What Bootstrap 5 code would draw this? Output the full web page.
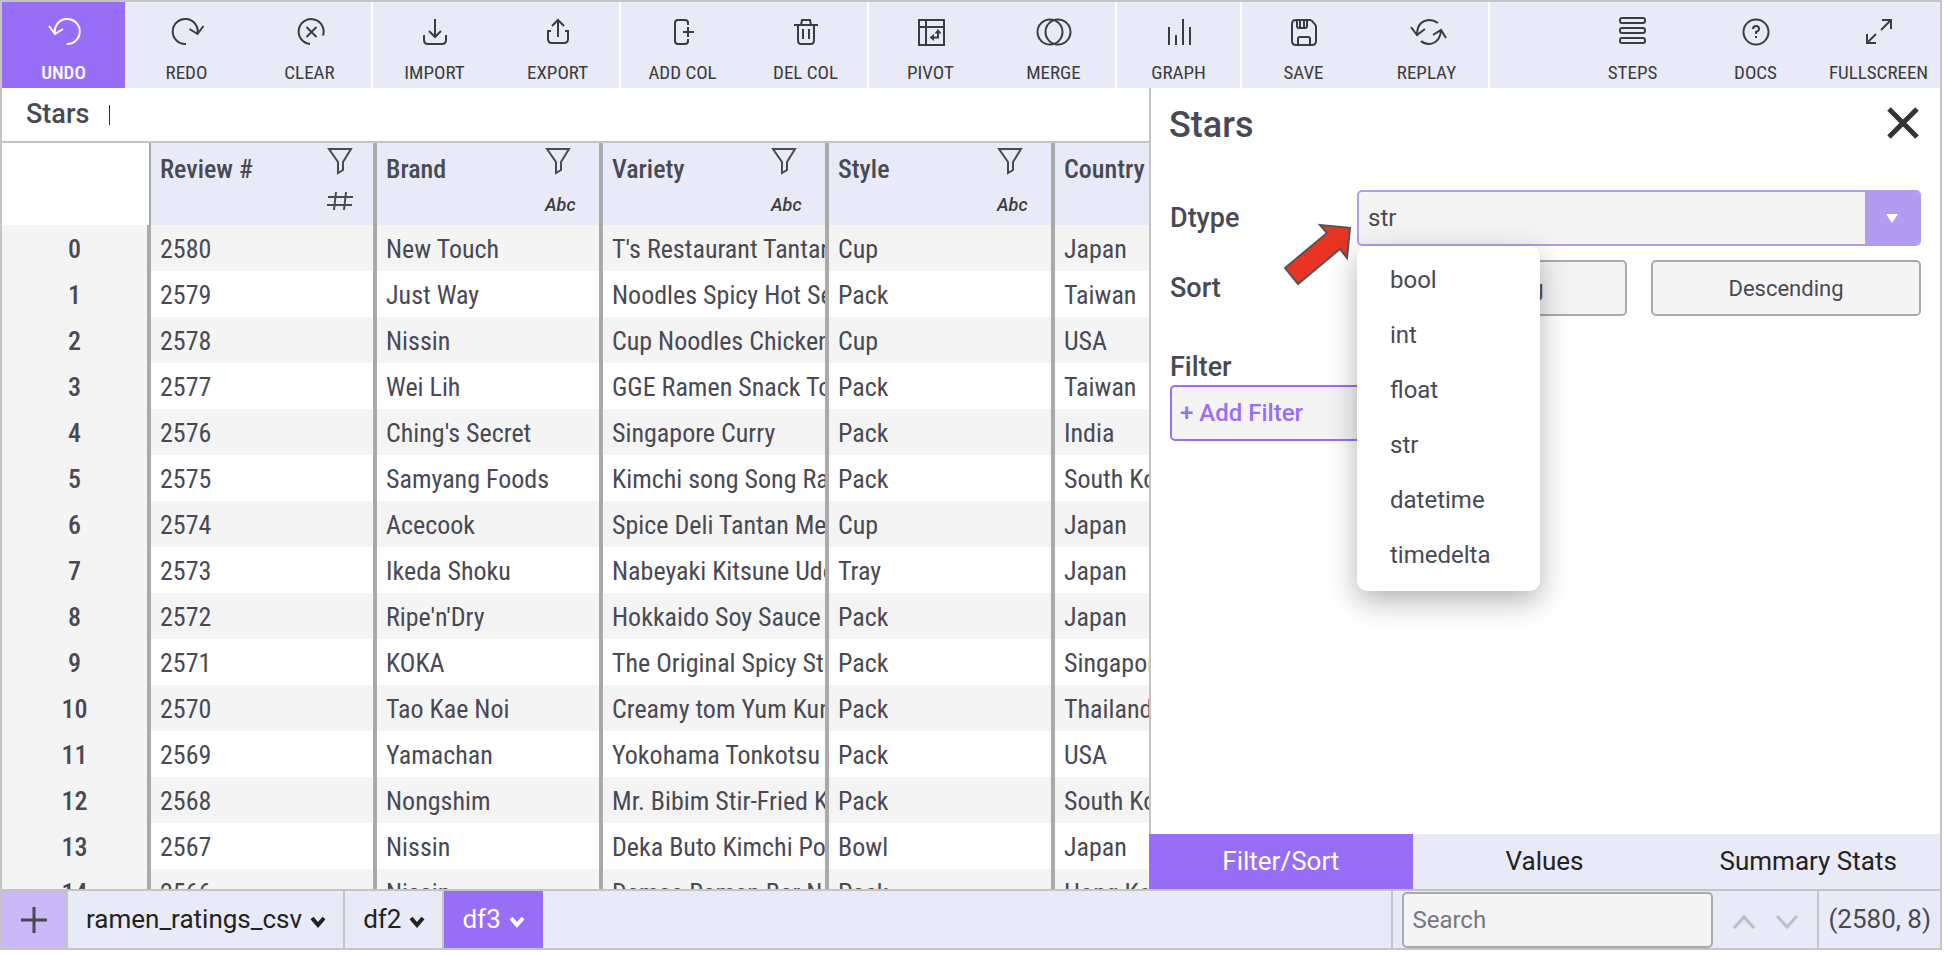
<!DOCTYPE html>
<html lang="en">
<head>
<meta charset="utf-8">
<title>Stars</title>
<meta name="viewport" content="width=device-width, initial-scale=1">
<link href="https://cdn.jsdelivr.net/npm/bootstrap@5.3.0/dist/css/bootstrap.min.css" rel="stylesheet">
<style>
:root{--ink:#494953;--dark:#3c3c40;--violet:#976ef7;--lav:#e8eaf7;--line:#c4c4c4;--rule:#aaa;--soft:#f4f4f4}
html,body{height:100%}
body{font-family:Roboto,"Liberation Sans",sans-serif;color:var(--ink);background:#fff;padding:0 2px 4px 0}
.sheet-app{height:100%;border:2px solid var(--line);overflow:hidden}
.cond{font-family:"Roboto Condensed",Roboto,"Liberation Sans",sans-serif}
button{border:0;padding:0;background:none;color:inherit}
svg{fill:none;stroke:currentColor;stroke-width:2;display:block;overflow:visible}
.toolbar{height:86px;flex:none;background:var(--lav);color:var(--dark);font-size:19px;line-height:24px}
.toolbar button{width:123px;height:100%;padding:12px 0 3px}
.toolbar button.active{background:var(--violet);color:#fff;font-weight:500}
.tool-group{border-right:2px solid #fff}
.work{min-height:0;flex:1 1 0}
.formula{height:55px;font-size:27px;font-weight:500;border-bottom:2px solid var(--line);gap:20px;padding-left:24px}
.caret-bar{width:1px;height:20px;background:#333}
.grid{table-layout:fixed;width:1279px;border-collapse:separate;border-spacing:0;font-size:26px;line-height:44px}
.grid th,.grid td{border-right:4px solid var(--rule);padding:2px 0 0 9px;white-space:nowrap;overflow:hidden}
.grid thead th{height:82px;background:var(--lav);font-weight:500;vertical-align:top;padding-top:4px}
.grid thead th:first-child{background:#fff;border-right:2px solid var(--rule)}
.grid tbody th{background:var(--soft);text-align:center;font-weight:500;padding-left:0}
.grid tbody tr:nth-child(odd) td{background:var(--soft)}
.kind{padding-right:20px}
.kind svg:first-child{margin-bottom:16px}
.abc{min-width:34px;font-family:Roboto,"Liberation Sans",sans-serif;font-size:18px;line-height:28px;font-style:italic;color:var(--dark)}
.side{width:791px;flex:none;border-left:2px solid var(--line)}
.side h2{font-size:36px;line-height:44px;font-weight:500}
.side-head{padding:15px 18px 0}
.fields{padding:43px 19px 0}
.lab{width:187px;font-size:27px;line-height:32px;font-weight:500}
.box{height:56px;border:2px solid var(--rule);border-radius:5px;background:var(--soft);font-size:22px}
.pick{border-color:#b49af0;overflow:hidden;font-size:24px}
.pick input{border:0;background:none;color:inherit;outline:0;padding:0 0 0 9px;min-width:0}
.pick button{width:54px;background:#b49af0;color:#fff}
.type-menu{position:absolute;left:0;top:56px;width:183px;border:0;border-radius:10px;padding:7px 0 8px;box-shadow:0 10px 30px rgba(0,0,0,.3)}
.type-menu .dropdown-item{font-size:24px;line-height:55px;padding:0 0 0 33px;color:var(--ink)}
.pointer{position:absolute;left:-73px;top:34px}
.sorts{margin-top:14px}
.filt{margin-top:35px;margin-bottom:2px}
.add{width:270px;border-color:var(--violet);color:var(--violet);font-size:24px;font-weight:500;padding-left:8px}
.modes{height:55px;margin-left:-2px;background:var(--lav);font-size:26px;color:#222}
.modes button.active{background:var(--violet);color:#fff}
.foot{height:59px;flex:none;border-top:2px solid var(--line);background:var(--lav);font-size:26px}
.foot>*{border-right:2px solid var(--line)}
.foot>button{color:#222}
.plus{width:66px;background:#cbb8f8}
.tab{padding:0 17px 0 18px;gap:8px}
.tab svg{margin-top:4px}
.foot .on{background:var(--violet);color:#fff;border-right:0;padding-right:18px}
.finder{padding-left:9px;padding-right:18px;gap:19px}
.finder svg{margin-top:4px}
.find{width:311px;font-size:24px;color:var(--ink);padding:0 0 0 8px}
.find::placeholder{color:#777783;opacity:1}
.dims{padding:0 9px}
</style>
</head>
<body>
<div class="sheet-app d-flex flex-column">
<header class="toolbar cond d-flex">
 <div class="tool-group d-flex">
  <button class="active d-flex flex-column align-items-center justify-content-between"><svg width="34" height="36" viewBox="0 0 34 36"><path d="M8 20A12.5 12.5 0 1 1 19.500 30M2 12L8 20L16 15"/></svg>UNDO</button>
  <button class="d-flex flex-column align-items-center justify-content-between"><svg width="34" height="36" viewBox="0 0 34 36"><path d="M27.500 20A12.500 12.500 0 1 0 16 30M33.500 12L27.500 20L19.500 15"/></svg>REDO</button>
  <button class="d-flex flex-column align-items-center justify-content-between"><svg width="34" height="36" viewBox="0 0 34 36"><path d="M17 30A12.500 12.500 0 1 1 30 21.500M13.500 13L23.500 23M23.500 13L13.500 23"/></svg>CLEAR</button>
 </div>
 <div class="tool-group d-flex">
  <button class="d-flex flex-column align-items-center justify-content-between"><svg width="34" height="36" viewBox="0 1 34 36"><path d="M17 6V24M11 18L17 24L23 18M6 22V27Q6 31 10 31H24Q28 31 28 27V22"/></svg>IMPORT</button>
  <button class="d-flex flex-column align-items-center justify-content-between"><svg width="34" height="36" viewBox="0 1 34 36"><path d="M17 24V7M11 13L17 7L23 13M10 18H7V26Q7 30 11 30H23Q27 30 27 26V18H24"/></svg>EXPORT</button>
 </div>
 <div class="tool-group d-flex">
  <button class="d-flex flex-column align-items-center justify-content-between"><svg width="34" height="36" viewBox="0 1 34 36"><path d="M22 12V10Q22 7 19 7H12Q9 7 9 10V28Q9 31 12 31H19Q22 31 22 28V26M17 19H28M22 14V24"/></svg>ADD COL</button>
  <button class="d-flex flex-column align-items-center justify-content-between"><svg width="34" height="36" viewBox="0 1 34 36"><path d="M5 12H29M12 12L13 7H21L22 12M9 12V27Q9 31 12 31H22Q25 31 25 27V12M14 16V26M20 16V26"/></svg>DEL COL</button>
 </div>
 <div class="tool-group d-flex">
  <button class="d-flex flex-column align-items-center justify-content-between"><svg width="34" height="36" viewBox="0 0 34 36"><path d="M5 6H30V31H5ZM5 13H30M12 6V31M18 23.500H24V18"/><path d="M20 20V27L15.500 23.500ZM20.500 19.500H27.500L24 15Z" fill="currentColor" stroke="none"/></svg>PIVOT</button>
  <button class="d-flex flex-column align-items-center justify-content-between"><svg width="36" height="36" viewBox="0 0 36 36"><circle cx="14" cy="18" r="12.500"/><circle cx="22" cy="18" r="12.500"/></svg>MERGE</button>
 </div>
 <div class="tool-group d-flex">
  <button class="d-flex flex-column align-items-center justify-content-between"><svg width="34" height="36" viewBox="0 0 34 36"><path d="M7 13V31M14 21V31M21 5V31M28 13V31"/></svg>GRAPH</button>
 </div>
 <div class="tool-group d-flex">
  <button class="d-flex flex-column align-items-center justify-content-between"><svg width="34" height="36" viewBox="0 0 34 36"><path d="M9 6H23Q25 6 29 12V27Q29 31 25 31H9Q5 31 5 27V10Q5 6 9 6M10 6V12Q10 14 12 14H18Q20 14 20 12V6M13 6V13M17 6V13M11 31V25Q11 23 13 23H21Q23 23 23 25V31"/></svg>SAVE</button>
  <button class="d-flex flex-column align-items-center justify-content-between"><svg width="36" height="36" viewBox="0 0 36 36"><path d="M8 21Q8 7 20 6Q25 6 29 9M2 13L8 21L16 15M32 16Q31 29 20 30Q15 30 12 27M24 21L32 16L37 24"/></svg>REPLAY</button>
 </div>
 <div class="d-flex ms-auto">
  <button class="d-flex flex-column align-items-center justify-content-between"><svg width="34" height="36" viewBox="0 0 34 36"><rect x="4" y="4" width="25" height="5" rx="2"/><rect x="4" y="14" width="25" height="5" rx="2"/><rect x="4" y="24" width="25" height="5" rx="2"/></svg>STEPS</button>
  <button class="d-flex flex-column align-items-center justify-content-between"><svg width="34" height="36" viewBox="0 1 34 36"><circle cx="17" cy="19" r="12.500"/><path d="M14 16Q14 13 17 13Q20 13 20 16Q20 18 17 19V21M17 23V25"/></svg>DOCS</button>
  <button class="d-flex flex-column align-items-center justify-content-between"><svg width="34" height="36" viewBox="0 1 34 36"><path d="M19 17L29 7M20 7H29V16M14 21L5 30M5 21V30H14"/></svg>FULLSCREEN</button>
 </div>
</header>
<div class="work d-flex overflow-hidden">
 <main class="flex-fill overflow-hidden">
  <div class="formula d-flex align-items-center">Stars<span class="caret-bar"></span></div>
  <table class="grid cond">
   <colgroup><col style="width:149px"><col><col><col><col><col></colgroup>
   <thead><tr id="heads"><th></th></tr></thead>
   <tbody id="rows"></tbody>
  </table>
 </main>
 <aside class="side d-flex flex-column">
  <div class="side-head d-flex justify-content-between">
   <h2 class="m-0">Stars</h2>
   <button aria-label="Close"><svg width="38" height="44" viewBox="0 0 38 44"><path stroke="#333" stroke-width="5" d="M5 6L33 34M33 6L5 34"/></svg></button>
  </div>
  <div class="fields">
   <div class="d-flex align-items-center">
    <label class="lab" for="dtype">Dtype</label>
    <div class="position-relative flex-fill">
     <div class="box pick d-flex"><input id="dtype" class="flex-fill" value="str"><button aria-label="Show types"><svg class="m-auto" width="12" height="12"><path d="M0 2H12L6 11Z" fill="#fff" stroke="none"/></svg></button></div>
     <div class="type-menu dropdown-menu show"><a class="dropdown-item" href="#">bool</a><a class="dropdown-item" href="#">int</a><a class="dropdown-item" href="#">float</a><a class="dropdown-item" href="#">str</a><a class="dropdown-item" href="#">datetime</a><a class="dropdown-item" href="#">timedelta</a></div>
     <svg class="pointer" width="68" height="62"><path d="M1 44L43 9L36 1L66 4L63 34L56 25L14 60Z" fill="#e93323" stroke="#555"/></svg>
    </div>
   </div>
   <div class="sorts d-flex align-items-center">
    <span class="lab">Sort</span>
    <div class="d-flex flex-fill gap-4"><button class="box flex-fill w-50">Ascending</button><button class="box flex-fill w-50">Descending</button></div>
   </div>
   <div class="lab filt">Filter</div>
   <button class="box add text-start">+ Add Filter</button>
  </div>
  <div class="modes d-flex mt-auto"><button class="active flex-fill w-100">Filter/Sort</button><button class="flex-fill w-100">Values</button><button class="flex-fill w-100">Summary Stats</button></div>
 </aside>
</div>
<footer class="foot d-flex">
 <button class="plus" aria-label="Add sheet"><svg class="m-auto" width="28" height="28"><path d="M14 1V27M1 14H27" stroke="#494953" stroke-width="3"/></svg></button>
 <button class="tab d-flex align-items-center">ramen_ratings_csv<svg width="16" height="12"><path d="M2 2L8 9L14 2" stroke-width="4"/></svg></button>
 <button class="tab d-flex align-items-center">df2<svg width="16" height="12"><path d="M2 2L8 9L14 2" stroke-width="4"/></svg></button>
 <button class="tab on d-flex align-items-center">df3<svg width="16" height="12"><path d="M2 2L8 9L14 2" stroke-width="4"/></svg></button>
 <div class="flex-fill"></div>
 <div class="finder d-flex align-items-center"><input class="box find" type="search" placeholder="Search" aria-label="Search"><button aria-label="Previous"><svg width="24" height="16"><path d="M2 14L12 3L22 14" stroke="#bdbdc6" stroke-width="3"/></svg></button><button aria-label="Next"><svg width="24" height="16"><path d="M2 2L12 13L22 2" stroke="#bdbdc6" stroke-width="3"/></svg></button></div>
 <div class="dims d-flex align-items-center border-0">(2580, 8)</div>
</footer>
</div>
<script src="https://cdn.jsdelivr.net/npm/bootstrap@5.3.0/dist/js/bootstrap.bundle.min.js"></script>
<script>
const funnel='<svg width="26" height="28" viewBox="0 0 26 28"><path d="M2 2H24L16 15V23L11 26V15Z"/></svg>';
const hash='<svg width="26" height="20" viewBox="0 0 26 20"><path d="M9 1L7 19M19 1L17 19M1 6H26M0 14H25"/></svg>';
["Review #","Brand","Variety","Style","Country"].forEach((n,i)=>{
 document.getElementById("heads").insertAdjacentHTML("beforeend",`<th scope="col"><div class="d-flex justify-content-between"><span>${n}</span><div class="kind">${funnel}${i?'<span class="abc d-block">Abc</span>':hash}</div></div></th>`);
});
[["New Touch","T's Restaurant Tantanmen","Cup","Japan"],["Just Way","Noodles Spicy Hot Sesame","Pack","Taiwan"],["Nissin","Cup Noodles Chicken Vegetable","Cup","USA"],["Wei Lih","GGE Ramen Snack Tomato","Pack","Taiwan"],["Ching's Secret","Singapore Curry","Pack","India"],["Samyang Foods","Kimchi song Song Ramen","Pack","South Korea"],["Acecook","Spice Deli Tantan Men","Cup","Japan"],["Ikeda Shoku","Nabeyaki Kitsune Udon","Tray","Japan"],["Ripe'n'Dry","Hokkaido Soy Sauce","Pack","Japan"],["KOKA","The Original Spicy Stir-Fried","Pack","Singapore"],["Tao Kae Noi","Creamy tom Yum Kung","Pack","Thailand"],["Yamachan","Yokohama Tonkotsu Shoyu","Pack","USA"],["Nongshim","Mr. Bibim Stir-Fried Kimchi","Pack","South Korea"],["Nissin","Deka Buto Kimchi Pork","Bowl","Japan"],["Nissin","Demae Ramen Bar Noodle","Pack","Hong Kong"]].forEach((r,i)=>{
 document.getElementById("rows").insertAdjacentHTML("beforeend",`<tr><th scope="row">${i}</th><td>${2580-i}</td>${r.map(c=>`<td>${c}</td>`).join("")}</tr>`);
});
</script>
</body>
</html>
